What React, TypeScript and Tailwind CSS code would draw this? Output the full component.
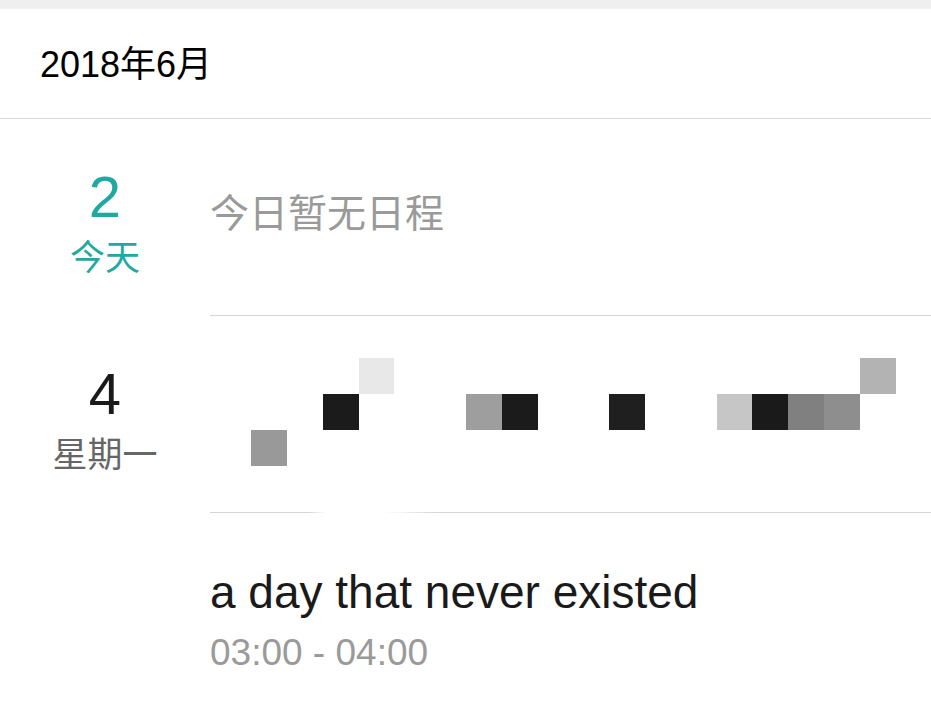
const font = { fontFamily: '"Liberation Sans", "Noto Sans CJK SC", sans-serif' };

type Cell = [number, string];

// mosaic cells, column index -> colour, one list per row
const mosaic: Cell[][] = [
  [[4, "#e8e8e8"], [18, "#b3b3b3"]],
  [
    [3, "#1b1b1b"],
    [7, "#9e9e9e"],
    [8, "#1b1b1b"],
    [11, "#1f1f1f"],
    [14, "#c6c6c6"],
    [15, "#1a1a1a"],
    [16, "#808080"],
    [17, "#8e8e8e"],
  ],
  [[1, "#999999"]],
];

function MosaicRow({ cells }: { cells: Cell[] }) {
  const map = new Map(cells);
  return (
    <div className="flex">
      {Array.from({ length: 19 }).map((_, i) => (
        <div
          key={i}
          className="w-[35.8px] h-[36px] shrink-0"
          style={{ backgroundColor: map.get(i) ?? "transparent" }}
        />
      ))}
    </div>
  );
}

function DayCol({ num, label, today }: { num: string; label: string; today?: boolean }) {
  return (
    <div className="w-[210px] shrink-0 flex flex-col items-center pt-[43px]">
      <div className={`text-[58px] leading-[70px] ${today ? "text-[#1fa9a1]" : "text-[#1a1a1a]"}`}>{num}</div>
      <div className={`mt-[4px] text-[35px] leading-[44px] ${today ? "text-[#1fa9a1]" : "text-[#666666]"}`}>{label}</div>
    </div>
  );
}

export default function App() {
  return (
    <div className="min-h-screen bg-white" style={font}>
      <div className="h-[9px] bg-[#efefef]" />
      <header className="h-[110px] border-b border-[#d9d9d9] pl-10 pt-[3px] flex items-center">
        <span className="text-[36px] text-black">2018年6月</span>
      </header>

      <div className="flex">
        <DayCol num="2" label="今天" today />
        <div className="flex-1 h-[197px] border-b border-[#d4d4d4] pt-[71px]">
          <div className="text-[39px] leading-[48px] text-[#9a9a9a]">今日暂无日程</div>
        </div>
      </div>

      <div className="flex">
        <DayCol num="4" label="星期一" />
        <div className="flex-1 h-[197px] flex flex-col">
          <div className="flex-1 pt-[42px] pl-[5.4px]">
            {mosaic.map((row, i) => (
              <MosaicRow key={i} cells={row} />
            ))}
          </div>
          <div className="flex h-px">
            <div className="w-[116px] bg-gradient-to-r from-[#d4d4d4] from-85% to-white" />
            <div className="w-[58px]" />
            <div className="flex-1 bg-gradient-to-r from-white to-[#d4d4d4] to-10%" />
          </div>
        </div>
      </div>

      <div className="flex">
        <div className="w-[210px] shrink-0" />
        <div className="flex-1 pt-[51px]">
          <div className="text-[46px] leading-[56px] text-[#1a1a1a]">a day that never existed</div>
          <div className="mt-[11px] text-[37px] leading-[44px] text-[#9a9a9a]">03:00 - 04:00</div>
        </div>
      </div>
    </div>
  );
}
